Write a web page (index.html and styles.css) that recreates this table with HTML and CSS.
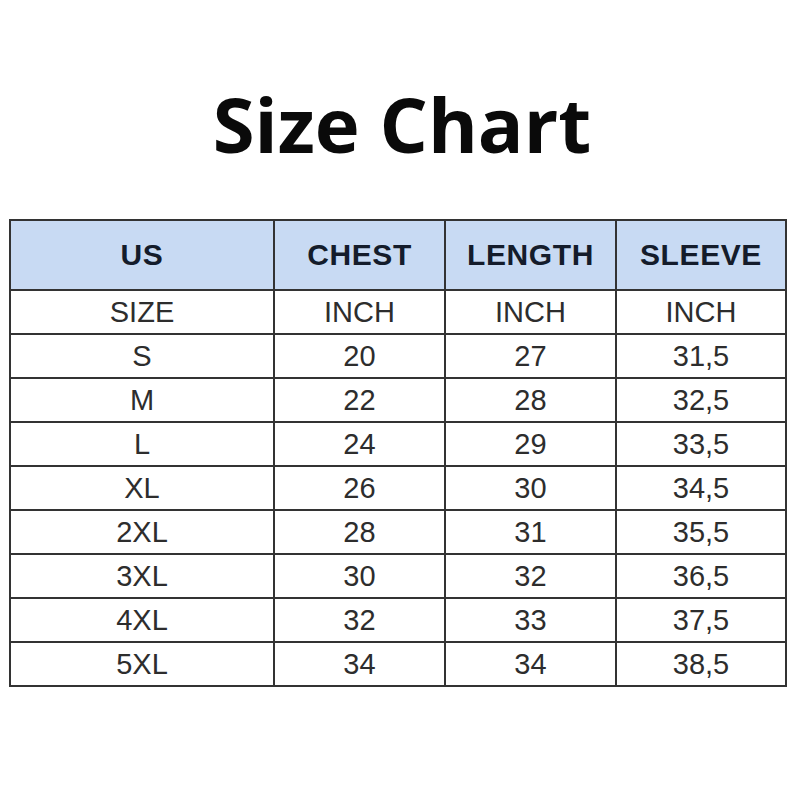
FILE: index.html
```html
<!DOCTYPE html>
<html>
<head>
<meta charset="utf-8">
<link rel="stylesheet" href="styles.css">
</head>
<body>
<div class="page">
  <h1 class="title">Size Chart</h1>
  <table class="chart">
    <colgroup>
      <col class="c1"><col class="c2"><col class="c3"><col class="c4">
    </colgroup>
    <thead>
      <tr class="head"><th>US</th><th>CHEST</th><th>LENGTH</th><th>SLEEVE</th></tr>
    </thead>
    <tbody>
      <tr class="units"><td>SIZE</td><td>INCH</td><td>INCH</td><td>INCH</td></tr>
      <tr><td>S</td><td>20</td><td>27</td><td>31,5</td></tr>
      <tr><td>M</td><td>22</td><td>28</td><td>32,5</td></tr>
      <tr><td>L</td><td>24</td><td>29</td><td>33,5</td></tr>
      <tr><td>XL</td><td>26</td><td>30</td><td>34,5</td></tr>
      <tr><td>2XL</td><td>28</td><td>31</td><td>35,5</td></tr>
      <tr><td>3XL</td><td>30</td><td>32</td><td>36,5</td></tr>
      <tr><td>4XL</td><td>32</td><td>33</td><td>37,5</td></tr>
      <tr><td>5XL</td><td>34</td><td>34</td><td>38,5</td></tr>
    </tbody>
  </table>
</div>
</body>
</html>
```

FILE: styles.css
```css
html, body {
  margin: 0;
  padding: 0;
  background: #ffffff;
}
.page {
  width: 794px;
  height: 794px;
  padding-top: 74px;
  box-sizing: border-box;
}
.title {
  margin: 0 0 0 10px;
  text-align: center;
  font-family: "Open Sans", sans-serif;
  font-weight: 700;
  font-size: 76px;
  line-height: 100px;
  color: #0a0a0a;
  height: 145px;
}
.chart {
  margin-left: 9px;
  width: 776px;
  border-collapse: collapse;
  table-layout: fixed;
  border: 2px solid #2e2e2e;
  font-family: "Liberation Sans", Arial, sans-serif;
}
.c1 { width: 264px; }
.c2 { width: 171px; }
.c3 { width: 171px; }
.c4 { width: 170px; }
.chart th, .chart td {
  border: 2px solid #333333;
  text-align: center;
  padding: 0;
}
.head th {
  height: 68px;
  background: #c8daf3;
  color: #141c2b;
  font-size: 30px;
  font-weight: 700;
  letter-spacing: 0.6px;
}
.units td {
  height: 43px;
}
.chart td {
  height: 42px;
  font-size: 29px;
  color: #2d2d2d;
  line-height: 1;
}
```
